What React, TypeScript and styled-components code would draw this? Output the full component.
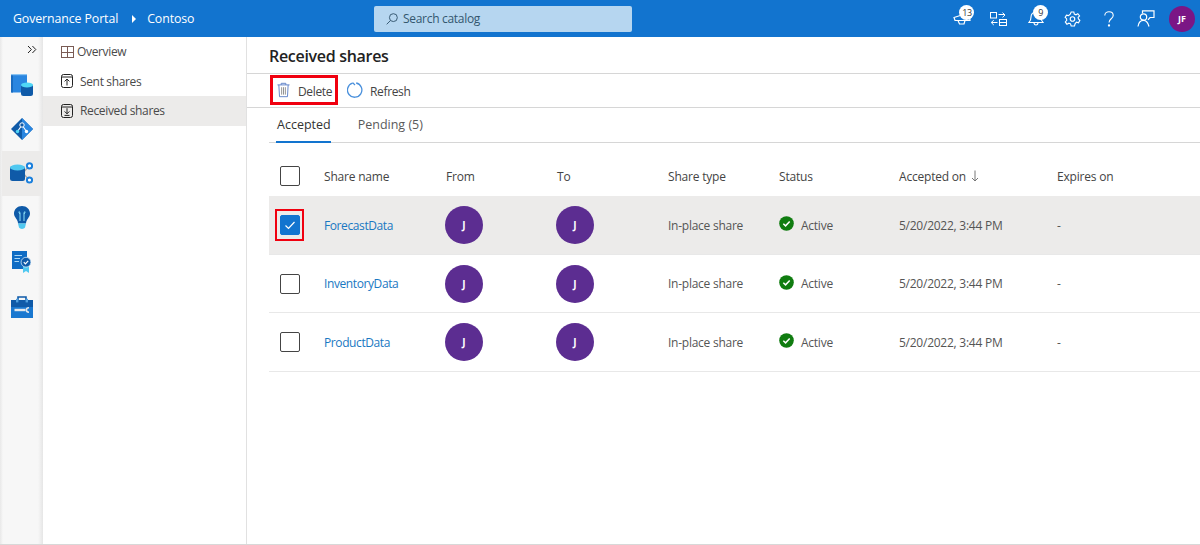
import styled, { createGlobalStyle } from 'styled-components';

const GlobalStyle = createGlobalStyle`
  html, body {
    margin: 0;
    padding: 0;
    background: #fff;
    font-family: "Open Sans", "Noto Sans", "Liberation Sans", sans-serif;
  }
`;

const rows = [
  { name: 'ForecastData', selected: true },
  { name: 'InventoryData', selected: false },
  { name: 'ProductData', selected: false },
];

const columns = '55px 122px 111px 111px 111px 120px 158px 1fr';

function CheckMark() {
  return (
    <svg width="12" height="12" viewBox="0 0 12 12">
      <path d="M1.5 6.5 L4.5 9.5 L10.5 3" fill="none" stroke="#fff" strokeWidth="1.2" />
    </svg>
  );
}

function TopIcons() {
  return (
    <TopIconRow>
      <TopIcon>
        <svg width="18" height="13" viewBox="0 0 18 13" fill="none" stroke="#fff" strokeWidth="1.2">
          <path d="M1 5.5 L16 0.8 L17 8.5 H2 Z" />
          <path d="M5 8.5 L6.5 12 H11 L12 8.5" />
        </svg>
        <Badge>13</Badge>
      </TopIcon>
      <TopIcon>
        <svg width="17" height="14" viewBox="0 0 17 14" fill="none" stroke="#fff" strokeWidth="1">
          <rect x="0.5" y="0.5" width="6" height="5.5" />
          <path d="M8.5 2.5 H14.5 M12.5 0.6 L15 3 L12.5 5.4" />
          <rect x="9.5" y="7.5" width="7" height="6" />
          <path d="M9.5 10.5 H16.5 M7.5 10.5 H1.5 M3.8 8.2 L1.2 10.5 L3.8 13" />
        </svg>
      </TopIcon>
      <TopIcon>
        <svg width="16" height="15" viewBox="0 0 16 15" fill="none" stroke="#fff" strokeWidth="1.1">
          <path d="M1 11.5 C2.6 10 3 8.5 3 6 C3 3 5 1 8 1 C11 1 13 3 13 6 C13 8.5 13.4 10 15 11.5 Z" />
          <path d="M6 11.5 C6 14.8 10 14.8 10 11.5" />
        </svg>
        <Badge>9</Badge>
      </TopIcon>
      <TopIcon>
        <svg width="17" height="16" viewBox="0 0 24 24" fill="none" stroke="#fff" strokeWidth="1.7">
          <circle cx="12" cy="12" r="3.4" />
          <path d="M10 1.5 H14 L14.7 4.6 L17.2 5.7 L20 4 L22.6 7.3 L20.4 9.5 L20.9 12 L23 14 L21 17.6 L18 16.8 L16 18.8 L15 22.5 H10 L9 19.2 L6.6 18.2 L3.6 19.8 L1.2 16.4 L3.4 14 L3.1 11.5 L1 9.6 L3 6.2 L6 7 L8.6 4.8 Z" />
        </svg>
      </TopIcon>
      <TopIcon>
        <svg width="10" height="16" viewBox="0 0 10 16" fill="none" stroke="#fff" strokeWidth="1.1">
          <path d="M0.8 4.5 C0.8 -0.5 9.2 -0.5 9.2 4.5 C9.2 7.8 5 7.8 5 11.5" />
          <circle cx="5" cy="14.5" r="0.6" fill="#fff" />
        </svg>
      </TopIcon>
      <TopIcon>
        <svg width="18" height="17" viewBox="0 0 18 17" fill="none" stroke="#fff" strokeWidth="1.2">
          <path d="M5.5 3.5 V0.8 H17 V7.5 H13 L11 9.8" />
          <circle cx="6.5" cy="7" r="3.2" />
          <path d="M1 16.5 C1.5 12.5 4 10.4 6.5 10.4 C9 10.4 11 12.5 12 16.5" />
        </svg>
      </TopIcon>
      <UserAvatar $size={26} $bg="#7b1685" $fontSize={9}>JF</UserAvatar>
    </TopIconRow>
  );
}

function RailIcons() {
  return (
    <>
      <RailItem>
        <svg width="22" height="22" viewBox="0 0 22 22">
          <rect x="0" y="0" width="16" height="18.5" rx="1" fill="#2a86e0" />
          <rect x="0" y="0" width="2" height="18.5" fill="#1a6cc0" />
          <rect x="0" y="0" width="16" height="1.2" fill="#8ac4f2" />
          <rect x="10" y="10" width="12" height="12" rx="2.5" fill="#0f5aa8" />
          <ellipse cx="16" cy="11" rx="6" ry="2.6" fill="#50d6f5" />
        </svg>
      </RailItem>
      <RailItem>
        <svg width="22" height="22" viewBox="0 0 22 22">
          <path d="M11 0 L22 11 L11 22 L0 11 Z" fill="#0f5aa8" />
          <path d="M11 0 L22 11 L11 22 Z" fill="#2a86e0" />
          <path d="M11 7 L6.5 13.5 M11 7 L15.5 13.5" stroke="#fff" strokeWidth="1.1" />
          <circle cx="11" cy="7" r="2.2" fill="#0f5aa8" stroke="#fff" strokeWidth="1" />
          <circle cx="6.5" cy="13.5" r="1.7" fill="#50d6f5" />
          <circle cx="15.5" cy="13.5" r="1.7" fill="#fff" />
        </svg>
      </RailItem>
      <RailItem $active>
        <svg width="23" height="22" viewBox="0 0 23 22">
          <path d="M13 11 L19 4 M13 11 L19 18" stroke="#a9a9a9" strokeWidth="1.2" />
          <rect x="0" y="4" width="15" height="15" rx="2.5" fill="#0f5aa8" />
          <ellipse cx="7.5" cy="5.5" rx="7.5" ry="3" fill="#50c8f0" />
          <circle cx="19.5" cy="3.8" r="2.6" fill="#fff" stroke="#1a7fdc" strokeWidth="2" />
          <circle cx="19.5" cy="18" r="2.6" fill="#fff" stroke="#1a7fdc" strokeWidth="2" />
        </svg>
      </RailItem>
      <RailItem>
        <svg width="16" height="23" viewBox="0 0 16 23">
          <path d="M8 0 C12.6 0 16 3.4 16 7.6 C16 11.6 12 13.4 12 17.5 H4 C4 13.4 0 11.6 0 7.6 C0 3.4 3.4 0 8 0 Z" fill="#0f5aa8" />
          <path d="M4 17.5 H12 L11 21.5 C10 23.4 6 23.4 5 21.5 Z" fill="#50c8f0" />
          <path d="M6 15 V8 M10 15 V8 M6 8 C3.6 5.4 6 4.4 6 8 M10 8 C12.4 5.4 10 4.4 10 8" stroke="#8ee0f8" strokeWidth="1" fill="none" />
        </svg>
      </RailItem>
      <RailItem>
        <svg width="19" height="22" viewBox="0 0 19 22">
          <rect x="0" y="0" width="15" height="18" fill="#0f6cc4" />
          <path d="M2.5 4.5 H10 M2.5 7.5 H8 M2.5 10.5 H7" stroke="#a8d6f5" strokeWidth="1.2" />
          <path d="M11 14 L11 22 L14 20 L17 22 L17 14 Z" fill="#50c8f0" />
          <circle cx="14" cy="11.2" r="4.9" fill="#0f5aa8" stroke="#cfe6f7" strokeWidth="0.8" />
          <path d="M11.8 11.2 L13.4 12.8 L16.2 9.8" fill="none" stroke="#fff" strokeWidth="1.2" />
        </svg>
      </RailItem>
      <RailItem>
        <svg width="22" height="22" viewBox="0 0 22 22">
          <path d="M7 4 V1 H15 V4" fill="none" stroke="#0f5aa8" strokeWidth="1.6" />
          <rect x="0" y="4" width="22" height="18" fill="#1a78d0" />
          <rect x="0" y="4" width="22" height="7" fill="#0f5aa8" />
          <rect x="5" y="2.8" width="2.4" height="3.6" fill="#50a0e0" />
          <rect x="14.6" y="2.8" width="2.4" height="3.6" fill="#50a0e0" />
          <path d="M3.5 14 H14.5" stroke="#e4e8ec" strokeWidth="2.4" />
          <path d="M18 11.8 C14.5 11.8 14.5 16.2 18 16.2" fill="none" stroke="#e4e8ec" strokeWidth="1.6" />
        </svg>
      </RailItem>
    </>
  );
}

export default function App() {
  return (
    <Page>
      <GlobalStyle />
      <TopBar>
        <Breadcrumb>
          <Brand>Governance Portal</Brand>
          <Caret />
          <Brand>Contoso</Brand>
        </Breadcrumb>
        <SearchBox>
          <svg width="12" height="12" viewBox="0 0 14 14" fill="none" stroke="#33556f" strokeWidth="1.1">
            <circle cx="8.6" cy="5.4" r="4.6" />
            <path d="M5.2 8.8 L0.8 13.2" />
          </svg>
          Search catalog
        </SearchBox>
        <TopIcons />
      </TopBar>
      <Body>
        <Rail>
          <RailToggle>
            <svg width="10" height="9" viewBox="0 0 10 9" fill="none" stroke="#222" strokeWidth="1">
              <path d="M1 1 L4.4 4.5 L1 8 M5.4 1 L8.8 4.5 L5.4 8" />
            </svg>
          </RailToggle>
          <RailIcons />
        </Rail>
        <Nav>
          <NavItem>
            <svg width="13" height="12" viewBox="0 0 13 12" fill="none" stroke="#7a5c55" strokeWidth="1">
              <rect x="0.5" y="0.5" width="12" height="11" />
              <path d="M0.5 6.5 H12.5 M6.5 0.5 V11.5" />
            </svg>
            <NavLabel $tight>Overview</NavLabel>
          </NavItem>
          <NavItem>
            <svg width="12" height="14" viewBox="0 0 12 14" fill="none" stroke="#222" strokeWidth="1">
              <rect x="0.5" y="0.5" width="11" height="13" rx="2" />
              <path d="M0.5 3 H11.5 M6 11.5 V5 M3.6 7.4 L6 5 L8.4 7.4" />
            </svg>
            <NavLabel>Sent shares</NavLabel>
          </NavItem>
          <NavItem $active>
            <svg width="12" height="14" viewBox="0 0 12 14" fill="none" stroke="#222" strokeWidth="1">
              <rect x="0.5" y="0.5" width="11" height="13" rx="2" />
              <path d="M0.5 3 H11.5 M6 4.2 V9.8 M3.6 7.4 L6 9.8 L8.4 7.4 M3.5 11.4 H8.5" />
            </svg>
            <NavLabel>Received shares</NavLabel>
          </NavItem>
        </Nav>
        <Main>
          <Title>Received shares</Title>
          <Toolbar>
            <DeleteButton>
              <svg width="13" height="16" viewBox="0 0 14 16" fill="none" stroke="#5b7fc7" strokeWidth="1">
                <path d="M0.5 2.5 H13.5 M4.5 2.5 V0.8 H9.5 V2.5 M2 2.5 L2.7 15.2 H11.3 L12 2.5" />
                <path d="M5 5 V13 M7 5 V13 M9 5 V13" stroke="#8a8a8a" />
              </svg>
              <ToolLabel>Delete</ToolLabel>
            </DeleteButton>
            <RefreshButton>
              <svg width="16" height="16" viewBox="0 0 16 16" fill="none" stroke="#4a90dc" strokeWidth="1.3">
                <path d="M5.4 1.2 A7.2 7.2 0 1 0 9.2 1 M5.6 0.6 L8 3" />
              </svg>
              <ToolLabel>Refresh</ToolLabel>
            </RefreshButton>
          </Toolbar>
          <Tabs>
            <Tab $active>Accepted</Tab>
            <Tab>Pending (5)</Tab>
          </Tabs>
          <HeaderRow>
            <CheckCell>
              <CheckBox />
            </CheckCell>
            <HeaderCell>Share name</HeaderCell>
            <HeaderCell>From</HeaderCell>
            <HeaderCell>To</HeaderCell>
            <HeaderCell>Share type</HeaderCell>
            <HeaderCell>Status</HeaderCell>
            <HeaderCell>
              Accepted on
              <SortArrow width="8" height="12" viewBox="0 0 8 12" fill="none" stroke="#777" strokeWidth="1">
                <path d="M4 0.5 V11 M1 8 L4 11 L7 8" />
              </SortArrow>
            </HeaderCell>
            <HeaderCell>Expires on</HeaderCell>
          </HeaderRow>
          {rows.map(row => (
            <Row key={row.name} $selected={row.selected}>
              <CheckCell>
                {row.selected ? (
                  <CheckFlag>
                    <CheckBox $checked>
                      <CheckMark />
                    </CheckBox>
                  </CheckFlag>
                ) : (
                  <CheckBox />
                )}
              </CheckCell>
              <NameLink>{row.name}</NameLink>
              <div>
                <PersonAvatar $size={38} $bg="#5c2d91" $fontSize={10}>J</PersonAvatar>
              </div>
              <div>
                <PersonAvatar $size={38} $bg="#5c2d91" $fontSize={10}>J</PersonAvatar>
              </div>
              <Cell>In-place share</Cell>
              <StatusCell>
                <StatusIcon width="15" height="15" viewBox="0 0 16 16">
                  <circle cx="8" cy="8" r="7.8" fill="#107c10" />
                  <path d="M4.6 8.2 L7 10.5 L11.4 5.8" fill="none" stroke="#fff" strokeWidth="1.6" />
                </StatusIcon>
                Active
              </StatusCell>
              <Cell>5/20/2022, 3:44 PM</Cell>
              <Cell>-</Cell>
            </Row>
          ))}
        </Main>
      </Body>
    </Page>
  );
}

const Page = styled.div`
  width: 1200px;
  height: 545px;
  display: flex;
  flex-direction: column;
  overflow: hidden;
  background: #fff;
  box-sizing: border-box;
  border-bottom: 1px solid #d8d8d8;
`;

const TopBar = styled.header`
  height: 37px;
  flex: none;
  display: grid;
  grid-template-columns: 361px 258px 1fr;
  align-items: center;
  padding-left: 13px;
  background: #1274cf;
  color: #fff;
  box-sizing: border-box;
`;

const Breadcrumb = styled.div`
  display: flex;
  align-items: center;
`;

const Brand = styled.span`
  font-size: 12.35px;
  font-weight: 500;
  letter-spacing: -0.1px;
`;

const Caret = styled.span`
  width: 0;
  height: 0;
  margin: 0 11px 0 14px;
  border-left: 4px solid #fff;
  border-top: 4px solid transparent;
  border-bottom: 4px solid transparent;
`;

const SearchBox = styled.div`
  height: 26px;
  display: flex;
  align-items: center;
  gap: 5px;
  padding-left: 12px;
  box-sizing: border-box;
  background: #b6d6f0;
  border-radius: 2px;
  color: #33566f;
  font-size: 12px;
  letter-spacing: -0.3px;
`;

const TopIconRow = styled.div`
  justify-self: end;
  margin-right: 5px;
  display: flex;
  align-items: center;
`;

const TopIcon = styled.div`
  position: relative;
  width: 36.8px;
  height: 36px;
  display: flex;
  align-items: center;
  justify-content: center;
`;

const Badge = styled.span`
  position: absolute;
  top: 4px;
  right: 6px;
  width: 15px;
  height: 15px;
  border-radius: 50%;
  background: #fff;
  color: #333;
  font-size: 9px;
  line-height: 15px;
  text-align: center;
  letter-spacing: -0.4px;
`;

const Avatar = styled.div<{ $size: number; $bg: string; $fontSize: number }>`
  width: ${p => p.$size}px;
  height: ${p => p.$size}px;
  border-radius: 50%;
  background: ${p => p.$bg};
  color: #fff;
  font-size: ${p => p.$fontSize}px;
  font-weight: 700;
  display: flex;
  align-items: center;
  justify-content: center;
`;

const UserAvatar = styled(Avatar)`
  margin-left: 4.6px;
`;

const PersonAvatar = styled(Avatar)`
  margin-left: -1px;
`;

const Body = styled.div`
  flex: 1;
  display: flex;
  min-height: 0;
`;

const Rail = styled.nav`
  width: 43px;
  flex: none;
  display: flex;
  flex-direction: column;
  box-sizing: border-box;
  padding-left: 2px;
  background: linear-gradient(to right, #e8e8e8 0, #f7f7f7 3px, #f7f7f7 38px, #e6e6e6 43px);
`;

const RailToggle = styled.div`
  height: 25.4px;
  flex: none;
  display: flex;
  align-items: center;
  justify-content: flex-end;
  padding-right: 6px;
`;

const RailItem = styled.div<{ $active?: boolean }>`
  height: 44.4px;
  width: 39px;
  flex: none;
  display: flex;
  align-items: center;
  justify-content: center;
  background: ${p => (p.$active ? '#ecebea' : 'transparent')};
`;

const Nav = styled.nav`
  width: 204px;
  flex: none;
  display: flex;
  flex-direction: column;
  border-right: 1px solid #e1e1e1;
  box-sizing: border-box;
`;

const NavItem = styled.div<{ $active?: boolean }>`
  height: 29.5px;
  flex: none;
  display: flex;
  align-items: center;
  padding-left: 18px;
  background: ${p => (p.$active ? '#ecebea' : 'transparent')};
`;

const NavLabel = styled.span<{ $tight?: boolean }>`
  margin-left: ${p => (p.$tight ? '3px' : '7px')};
  font-size: 12px;
  color: #4a4a4a;
  letter-spacing: -0.35px;
`;

const Main = styled.main`
  flex: 1;
  min-width: 0;
  display: flex;
  flex-direction: column;
`;

const Title = styled.h1`
  height: 37px;
  margin: 0;
  padding: 9px 0 0 22px;
  box-sizing: border-box;
  font-size: 16px;
  line-height: 20px;
  font-weight: 600;
  color: #222;
  letter-spacing: -0.3px;
  border-bottom: 1px solid #d6d6d6;
`;

const Toolbar = styled.div`
  height: 34px;
  flex: none;
  display: flex;
  align-items: flex-start;
  padding: 1px 0 0 23px;
  gap: 9px;
  box-sizing: border-box;
  border-bottom: 1px solid #d6d6d6;
`;

const ToolButton = styled.div`
  height: 30px;
  display: flex;
  align-items: center;
  box-sizing: border-box;
  font-size: 12px;
  letter-spacing: -0.35px;
  color: #444;
`;

const ToolLabel = styled.span`
  padding-top: 2px;
`;

const DeleteButton = styled(ToolButton)`
  width: 68px;
  gap: 8px;
  padding-left: 4px;
  border: 3px solid #f0000f;
`;

const RefreshButton = styled(ToolButton)`
  gap: 7px;
`;

const Tabs = styled.div`
  height: 35px;
  flex: none;
  margin-left: 22px;
  display: flex;
  align-items: stretch;
  gap: 26px;
  padding-left: 7px;
  border-bottom: 1px solid #d6d6d6;
  box-sizing: border-box;
`;

const Tab = styled.div<{ $active?: boolean }>`
  display: flex;
  align-items: center;
  padding: 0 0 1px 1px;
  box-sizing: border-box;
  font-size: 12.5px;
  color: ${p => (p.$active ? '#333' : '#5a5a5a')};
  font-weight: ${p => (p.$active ? 500 : 400)};
  border-bottom: 2px solid ${p => (p.$active ? '#1274cf' : 'transparent')};
  margin-bottom: -1px;
`;

const HeaderRow = styled.div`
  height: 53px;
  flex: none;
  margin-left: 22px;
  padding-top: 13px;
  box-sizing: border-box;
  display: grid;
  grid-template-columns: ${columns};
  align-items: center;
`;

const HeaderCell = styled.div`
  display: flex;
  align-items: center;
  gap: 5px;
  font-size: 12px;
  letter-spacing: -0.2px;
  color: #444;
`;

const SortArrow = styled.svg`
  flex: none;
`;

const Row = styled.div<{ $selected: boolean }>`
  height: 58.5px;
  flex: none;
  margin-left: 22px;
  padding-top: 1px;
  display: grid;
  grid-template-columns: ${columns};
  align-items: center;
  box-sizing: border-box;
  background: ${p => (p.$selected ? '#ecebea' : 'transparent')};
  border-bottom: 1px solid #e8e8e8;
`;

const CheckCell = styled.div`
  display: flex;
  align-items: center;
  padding-left: 11px;
`;

const CheckFlag = styled.div`
  display: flex;
  margin-left: -5px;
  padding: 4px 2px 4px 3px;
  border: 2px solid #f0000f;
`;

const CheckBox = styled.div<{ $checked?: boolean }>`
  width: 18px;
  height: 18px;
  display: flex;
  align-items: center;
  justify-content: center;
  border: 1px solid ${p => (p.$checked ? '#1274cf' : '#444')};
  border-radius: 2px;
  background: ${p => (p.$checked ? '#1274cf' : '#fff')};
`;

const Cell = styled.div`
  font-size: 12px;
  letter-spacing: -0.25px;
  color: #555;
`;

const NameLink = styled(Cell)`
  color: #1a78c2;
  letter-spacing: -0.4px;
`;

const StatusCell = styled(Cell)`
  display: flex;
  align-items: center;
  gap: 7px;
`;

const StatusIcon = styled.svg`
  flex: none;
  margin-bottom: 3px;
`;
